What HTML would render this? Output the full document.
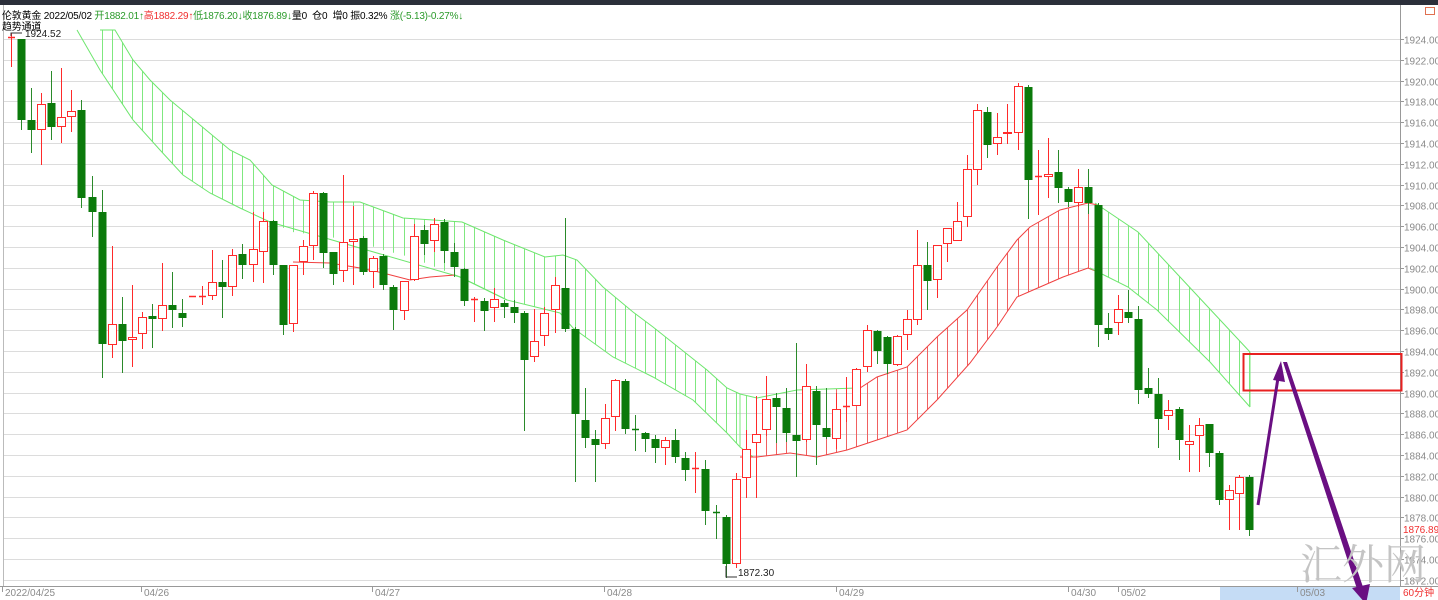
<!DOCTYPE html>
<html><head><meta charset="utf-8"><style>
body{margin:0;width:1438px;height:600px;overflow:hidden;background:#fff;font-family:"Liberation Sans","Noto Sans CJK SC",sans-serif}
#hd{position:absolute;left:0;top:0;width:1438px;height:5px;background:#2b2f3a}
.t{position:absolute;font-size:10px;letter-spacing:-0.2px;white-space:nowrap}
.g{color:#2a9a2a}.r{color:#f03030}
</style></head><body>
<div id="hd"></div>
<svg id="s" width="1438" height="600" style="position:absolute;left:0;top:0" xmlns="http://www.w3.org/2000/svg"></svg>
<div class="t" style="left:2px;top:7px">伦敦黄金 2022/05/02 <span class="g">开1882.01↑</span><span class="r">高1882.29↑</span><span class="g">低1876.20↓</span><span class="g">收1876.89↓</span>量0&nbsp; 仓0&nbsp; 增0 振0.32% <span class="g">涨(-5.13)-0.27%↓</span></div>
<div class="t" style="left:2px;top:18px">趋势通道</div>
<div style="position:absolute;left:1300px;top:538px;font-size:42px;line-height:48px;white-space:nowrap;color:#c4c4c4;font-family:'Noto Serif CJK SC',serif">汇外网</div>
<script>
var D=[[37,37,33,67],[39,120,39,130],[120,130,88,153],[130,104,93,165],[103,127,71,140],[127,117,68,143],[117,111,90,132],[110,198,100,208],[197,212,176,237],[212,344,190,378],[345,324,246,358],[324,341,297,373],[340,337,285,367],[334,317,312,349],[316,319,304,348],[319,305,263,331],[305,310,272,328],[313,318,299,327],[296,296,296,297],[296,296,286,305],[296,282,250,300],[282,287,260,318],[287,255,249,296],[254,265,244,279],[265,249,212,282],[252,221,212,283],[221,265,220,275],[265,325,265,335],[324,265,265,332],[262,246,240,275],[246,193,191,260],[193,253,192,268],[252,274,252,285],[271,242,175,282],[242,239,206,285],
[238,272,236,275],[272,258,256,288],[256,285,254,290],[287,310,285,330],[311,281,281,320],[280,236,224,281],[230,244,225,255],[241,224,218,252],[222,251,219,263],[252,267,243,277],[269,301,268,306],[299,299,297,322],[301,311,298,331],[308,299,288,322],[303,307,300,318],[307,313,300,323],[313,360,311,431],[357,341,309,362],[336,313,307,346],[310,285,277,333],[288,329,218,332],[329,414,327,482],[420,438,388,448],[439,445,430,482],[444,418,404,449],[417,380,379,431],[381,429,379,434],[429,430,415,451],[433,439,432,452],[439,448,435,463],[448,440,437,465],[440,457,429,463],[458,470,452,481],[468,468,452,493],[469,511,460,525],[512,512,505,539],[517,564,515,578],[564,479,473,568],
[478,449,430,498],[443,434,396,498],[430,399,376,436],[398,407,393,443],[408,433,388,442],[435,441,343,477],[440,386,364,442],[391,425,386,465],[428,437,388,439],[439,409,393,449],[407,406,377,422],[406,369,368,406],[367,330,325,372],[331,351,330,364],[337,364,336,374],[365,336,335,366],[335,319,310,350],[320,265,230,325],[265,281,242,310],[280,245,245,298],[244,228,228,262],[241,221,202,226],[217,169,155,227],[170,110,104,185],[112,145,107,158],[144,137,113,155],[134,132,104,144],[133,86,83,150],[87,180,85,219],[176,176,150,215],[177,174,138,198],[172,188,150,203],[189,202,187,207],[203,187,169,207],[187,203,169,214],
[205,325,203,347],[328,334,313,340],[323,309,295,335],[312,318,290,323],[319,390,306,404],[388,394,368,398],[394,419,378,448],[416,410,400,430],[409,440,407,460],[445,441,425,472],[436,425,418,472],[424,453,424,467],[453,500,451,505],[500,490,485,530],[494,477,475,530],[477,530,475,536]];
var s='';
function L(x1,y1,x2,y2,c,w){s+='<line x1="'+x1+'" y1="'+y1+'" x2="'+x2+'" y2="'+y2+'" stroke="'+c+'" stroke-width="'+(w||1)+'"/>';}
for(var p=1924;p>=1872;p-=2){var y=Math.round(39+(1924-p)*10.4)+.5;L(3,y,1400,y,'#dcdcdc');L(1400,y,1404,y,'#999');s+='<text x="1404" y="'+(y+4)+'" font-size="10" fill="#8a8a8a">'+p+'.00</text>';}
L(1400.5,5,1400.5,586,'#999');L(3.5,5,3.5,586,'#bbb');
L(0,586.5,1438,586.5,'#999');
s+='<rect x="1220" y="587" width="180" height="13" fill="#c5dcf5"/>';
var dl=[[2,'2022/04/25'],[141,'04/26'],[372,'04/27'],[604,'04/28'],[836,'04/29'],[1068,'04/30'],[1118,'05/02'],[1297,'05/03']];
dl.forEach(function(d){L(d[0]+.5,586,d[0]+.5,592,'#999');s+='<text x="'+(d[0]+3)+'" y="596" font-size="10" fill="#8a8a8a">'+d[1]+'</text>';});
s+='<text x="1403" y="596" font-size="10" fill="#f03030">60分钟</text>';
s+='<rect x="1402" y="524" width="36" height="11" fill="#fff"/><text x="1403" y="533" font-size="10" fill="#f03030">1876.89</text>';
s+='<rect x="1425.5" y="7.5" width="9" height="7" fill="none" stroke="#e07050"/>';
function X(i){return 11+i*10.065;}
function interp(pts,x){for(var k=0;k<pts.length-1;k++){if(x>=pts[k][0]&&x<=pts[k+1][0]){var t=(x-pts[k][0])/(pts[k+1][0]-pts[k][0]);return pts[k][1]+t*(pts[k+1][1]-pts[k][1]);}}return null;}
function pl(pts,c){s+='<polyline fill="none" stroke="'+c+'" points="'+pts.map(function(p){return p.join(',')}).join(' ')+'"/>';}
var gU=[[100,30],[115,30],[133,60],[150,80],[170,100],[200,125],[230,150],[250,160],[272,185],[300,200],[330,202],[360,202],[403,218],[433,220],[462,222],[503,240],[545,257],[563,255],[577,260],[603,287],[633,312],[653,327],[707,370],[727,388],[740,394],[757,398],[797,390],[857,388]];
var gL=[[77,30],[100,70],[133,120],[160,150],[183,175],[210,193],[240,208],[270,222],[293,232],[330,237],[360,242],[383,250],[410,257],[460,277],[507,300],[560,313],[573,328],[613,357],[653,377],[693,400],[727,433],[740,447],[753,457]];
var rL=[[293,262],[330,263],[360,268],[383,273],[410,280],[430,277],[455,275]];
var rU=[[857,390],[877,377],[907,367],[937,337],[967,310],[997,267],[1017,240],[1030,227],[1060,210],[1088,203],[1098,205]];
var rL2=[[740,457],[757,457],[790,453],[817,457],[847,450],[877,440],[907,430],[937,400],[970,363],[997,327],[1017,297],[1040,287],[1063,277],[1088,268],[1098,272]];
var g2U=[[1095,203],[1138,232],[1180,277],[1250,352]];
var g2L=[[1090,268],[1128,287],[1157,310],[1210,362],[1250,407]];
for(var i=0;i<D.length;i++){var x=Math.round(X(i))+.5,a,b,c;
 if(x<757){a=interp(gU,x);b=interp(gL,x);c='#7fe87f';}else if(x<1095){a=interp(gU,x);if(a===null)a=interp(rU,x);b=interp(rL2,x);c='#f06060';}else{a=interp(g2U,x);b=interp(g2L,x);c='#7fe87f';}
 if(a!==null&&b!==null)L(x,Math.max(30,a),x,b,c);}
pl(gU,'#6ee66e');pl(gL.filter(function(p){return p[0]<293||p[0]>455}),'#6ee66e');pl([[455,275],[460,277],[507,300]],'#6ee66e');pl(rL,'#f04040');pl(rU,'#f04040');pl(rL2,'#f04040');pl(g2U,'#6ee66e');pl(g2L,'#6ee66e');
pl([[740,394],[740,447]],'#7fe87f');pl([[1250,352],[1250,407]],'#7fe87f');
for(var i=0;i<D.length;i++){var d=D[i],x=Math.round(X(i)),o=d[0],c=d[1],h=d[2],l=d[3];
 var up=c<o||(c==o&&i!=70);var col=up?'#ff2a2a':'#0b7a0b';
 L(x+.5,h,x+.5,l,up?'#ff2a2a':'#2a8a2a');
 var t=Math.min(o,c),bh=Math.max(Math.abs(o-c),1);
 if(bh<=1){L(x-3,t+.5,x+4,t+.5,col,1.5);}
 else if(up)s+='<rect x="'+(x-3.5)+'" y="'+(t+.5)+'" width="8" height="'+(bh-1)+'" fill="#ffffff" stroke="#ff2a2a" stroke-width="1"/>';
 else s+='<rect x="'+(x-3.5)+'" y="'+t+'" width="8" height="'+bh+'" fill="'+col+'"/>';}
s+='<polyline points="11,36 11,33 22,33" fill="none" stroke="#333"/><text x="25" y="37" font-size="10" fill="#222">1924.52</text>';
s+='<polyline points="726,566 726,577 737,577" fill="none" stroke="#333"/><text x="738" y="576" font-size="10" fill="#222">1872.30</text>';
s+='<rect x="1243.5" y="354" width="158" height="36.5" fill="none" stroke="#e82020" stroke-width="2"/>';
s+='<line x1="1258" y1="505" x2="1278" y2="378" stroke="#6a0f82" stroke-width="3"/><polygon points="1281,361 1273,380 1285,382" fill="#6a0f82"/>';
s+='<polygon points="1283,362 1287,362 1364,590 1358,592" fill="#6a0f82"/><polygon points="1366,604 1352,588 1370,584" fill="#6a0f82"/>';
document.getElementById('s').innerHTML=s;
</script>
</body></html>
